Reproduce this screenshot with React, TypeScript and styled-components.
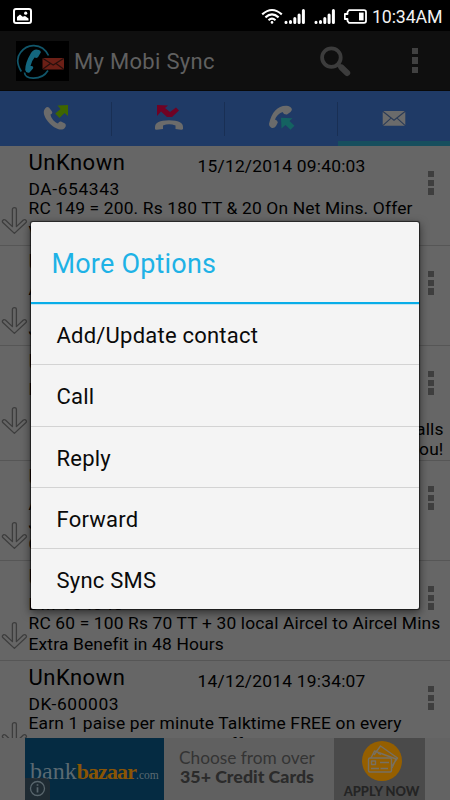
import React from 'react';
import styled, { createGlobalStyle } from 'styled-components';

const GlobalStyle = createGlobalStyle`
  * { box-sizing: border-box; }
  body { margin: 0; background: #666; font-family: Roboto, sans-serif; overflow: hidden; }
  svg { display: block; }
`;

const Screen = styled.div`
  position: relative;
  display: flex;
  flex-direction: column;
  width: 450px;
  height: 800px;
  overflow: hidden;
  background: #666;
  color: #000;
`;

const StatusBar = styled.div`
  flex: none;
  display: flex;
  align-items: center;
  justify-content: space-between;
  height: 31px;
  padding: 1px 7px 0 13px;
  background: #000;
  color: #fff;
`;

const StatusIcons = styled.div`
  display: flex;
  align-items: center;
`;

const Clock = styled.span`
  margin-left: 5px;
  padding-top: 2px;
  width: 71px;
  font-size: 17.8px;
  line-height: 24px;
  letter-spacing: -0.15px;
  color: #f2f2f2;
`;

const AppBar = styled.div`
  flex: none;
  display: flex;
  align-items: center;
  height: 60px;
  padding: 0 32px 0 16px;
  background: #0f0f0f;
  border-bottom: 1px solid #080808;
`;

const AppTitle = styled.h1`
  flex: 1;
  margin: 2px 0 0 5px;
  font-size: 22px;
  font-weight: 400;
  line-height: 28px;
  letter-spacing: 0.3px;
  color: #606060;
`;

const SearchButton = styled.div`
  margin-right: 61px;
`;

const Dots = styled.div<{ $color: string; $gap: number }>`
  display: flex;
  flex-direction: column;
  gap: ${(p) => p.$gap}px;
  &::before, &::after { content: ''; }
  &::before, &::after, & > i {
    width: 6.4px;
    height: 6.4px;
    background: ${(p) => p.$color};
  }
`;

const Tabs = styled.div`
  flex: none;
  display: grid;
  grid-template-columns: 112px 113px 113px 112px;
  height: 55px;
  background: #1f3a66;
`;

const Tab = styled.div<{ $active?: boolean }>`
  display: flex;
  justify-content: center;
  padding-top: 10px;
  border-bottom: ${(p) => (p.$active ? '5px solid #174f5e' : '0')};
  background: linear-gradient(#192f54, #192f54) right 11px / 1px 34px no-repeat;
  &:last-child { background: none; }
`;

const List = styled.div`
  flex: 1;
  overflow: hidden;
`;

const Row = styled.div<{ $height: number }>`
  display: flex;
  height: ${(p) => p.$height}px;
  border-bottom: 1px solid #565656;
`;

const ArrowCell = styled.div`
  flex: none;
  width: 28.5px;
  padding: 60px 0 0 1px;
`;

const RowBody = styled.div`
  flex: none;
  width: 399.5px;
`;

const RowHead = styled.div`
  display: flex;
  height: 30px;
  padding-top: 3px;
`;

const Sender = styled.div`
  width: 169px;
  font-size: 22px;
  line-height: 28px;
  letter-spacing: 0.5px;
`;

const Stamp = styled.div`
  padding-top: 4px;
  font-size: 17.4px;
  line-height: 26px;
  letter-spacing: 0.22px;
`;

const Address = styled.div`
  padding-top: 3px;
  height: 22px;
  font-size: 17.4px;
  line-height: 21px;
  letter-spacing: 0.6px;
`;

const Message = styled.div`
  width: 421px;
  white-space: pre;
  font-size: 17.4px;
  line-height: 20.5px;
  letter-spacing: 0.16px;
`;

const MessageTail = styled.div`
  width: 415px;
  text-align: right;
  font-size: 17.4px;
  line-height: 20.5px;
  letter-spacing: 0.14px;
  white-space: pre;
`;

const RowMenu = styled.div`
  padding-top: 25px;
`;

const AdBanner = styled.div`
  flex: none;
  display: flex;
  height: 62px;
  padding-left: 25px;
  background: #636363;
`;

const BrandPanel = styled.div`
  position: relative;
  width: 139px;
  padding: 17px 0 0 5px;
  background: #052b42;
  font-family: "Liberation Serif", serif;
  font-size: 24px;
  line-height: 32px;
  color: #5b6a72;
  white-space: nowrap;
`;

const BrandAccent = styled.span`
  font-size: 22px;
  font-weight: 700;
  letter-spacing: -0.9px;
  color: #8a5505;
`;

const BrandSuffix = styled.span`
  font-size: 11.5px;
`;

const InfoBadge = styled.div`
  position: absolute;
  left: 0;
  bottom: 0;
  width: 25px;
  height: 22px;
  padding: 2px 0 0 4px;
  background: rgba(37, 44, 48, 0.85);
  border-top-right-radius: 5px;
`;

const AdCopy = styled.div`
  width: 170px;
  padding: 10px 0 0 15px;
  background: #606060;
  font-family: Lato, sans-serif;
  font-size: 17.3px;
  line-height: 19px;
  color: #343434;
  white-space: nowrap;
`;

const AdStrong = styled.div`
  padding-left: 1px;
  line-height: 18px;
  font-size: 17.8px;
  font-weight: 900;
  color: #2b2b2b;
`;

const ApplyPanel = styled.div`
  display: flex;
  flex-direction: column;
  align-items: center;
  width: 91px;
  padding: 3px 0 0 4px;
  background: #4a4a4a;
`;

const ApplyLabel = styled.span`
  padding-top: 2px;
  font-family: Lato, sans-serif;
  font-size: 12.9px;
  font-weight: 900;
  line-height: 17px;
  color: #242424;
  white-space: nowrap;
`;

const Dialog = styled.div`
  position: absolute;
  left: 31px;
  top: 222px;
  width: 388px;
  height: 387px;
  border-radius: 2px;
  background: #f4f4f4;
  box-shadow: 0 0 1px 0.5px rgba(0, 0, 0, 0.6), 0 3px 9px 1px rgba(0, 0, 0, 0.5);
`;

const DialogTitle = styled.div`
  height: 82px;
  padding: 24px 0 0 20.5px;
  border-bottom: 2px solid #08ade8;
  box-shadow: 0 1px 0 #c4e5f1;
  font-size: 27px;
  line-height: 36px;
  letter-spacing: 0.2px;
  color: #1eb2e6;
`;

const Option = styled.div`
  height: 61.25px;
  padding-left: 25.5px;
  border-bottom: 1px solid #d3d3d3;
  font-size: 22px;
  line-height: 63.5px;
  letter-spacing: 0.22px;
  color: #0a0a0a;
  &:last-child { border-bottom: 0; }
`;

const OverflowDots = ({ color, gap }: { color: string; gap: number }) => (
  <Dots $color={color} $gap={gap}><i /></Dots>
);

const DownArrow = () => (
  <svg width="27" height="29" viewBox="0 0 27 29" fill="none" stroke="#3d3d3d" strokeWidth="1.3" strokeLinejoin="round">
    <path d="M11.4 3.5Q11.4 1.7 13.4 1.7Q15.4 1.7 15.4 3.5V20.6L22.4 14Q24 13 25 14.3Q26 15.6 24.7 16.8L13.4 27.4L2.1 16.8Q.8 15.6 1.8 14.3Q2.8 13 4.4 14L11.4 20.6Z" />
  </svg>
);

const SignalIcon = () => (
  <svg width="30" height="17" viewBox="0 0 30 17" stroke="#fff" strokeWidth="3" strokeLinecap="round">
    <path d="M2 14.3v.2M6.5 13.4v1.1M10.8 10.5v4M15.1 7v7.5M19.4 2.5v12" />
  </svg>
);

const HANDSET = 'M1 5C-1 12 11 25 19 24C22 23.5 24 20 22 18L18 16Q16 15.5 15 18C12 17 8 13 7.5 9Q10 8 9 6L6 2Q3 0 1 5Z';

type RowData = { height: number; from: string; date: string; address: string; lines: string[]; tail?: string[] };

const rows: RowData[] = [
  { height: 100, from: 'UnKnown', date: '15/12/2014 09:40:03', address: 'DA-654343', lines: ['RC 149 = 200. Rs 180 TT & 20 On Net Mins. Offer', 'valid for today only at select Outlets'] },
  { height: 100, from: 'UnKnown', date: '', address: 'AD-654343', lines: ['', 'J'] },
  { height: 115, from: 'UnKnown', date: '', address: 'DZ-600003', lines: ['', ''], tail: ['calls', 'you!'] },
  { height: 100, from: 'UnKnown', date: '', address: 'AZ-654343', lines: ['J', 'G'] },
  { height: 100, from: 'UnKnown', date: '', address: 'DM-654343', lines: ['RC 60 = 100 Rs 70 TT + 30 local Aircel to Aircel Mins', 'Extra Benefit in 48 Hours'] },
  { height: 100, from: 'UnKnown', date: '14/12/2014 19:34:07', address: 'DK-600003', lines: ['Earn 1 paise per minute Talktime FREE on every', 'Incoming call!!Want 2 sin ffer! Yes, dial and enjoy all'] },
];

const SmsRow = ({ row }: { row: RowData }) => (
  <Row $height={row.height}>
    <ArrowCell><DownArrow /></ArrowCell>
    <RowBody>
      <RowHead>
        <Sender>{row.from}</Sender>
        <Stamp>{row.date}</Stamp>
      </RowHead>
      <Address>{row.address}</Address>
      {row.tail
        ? <MessageTail>{['', ...row.tail].join('\n')}</MessageTail>
        : <Message>{row.lines.join('\n')}</Message>}
    </RowBody>
    <RowMenu><OverflowDots color="#3e3e3e" gap={2.3} /></RowMenu>
  </Row>
);

export default function App() {
  return (
    <Screen>
      <GlobalStyle />
      <StatusBar>
        <svg width="19" height="16" viewBox="0 0 19 16">
          <rect x="1" y="1" width="17" height="14" rx="2" fill="none" stroke="#fff" strokeWidth="2" />
          <path d="M4 12.5V9l3-2.5 2.7 2.2L12 8l3.5 2.5v2Z" fill="#fff" />
          <circle cx="12.7" cy="5.2" r="1.6" fill="#fff" />
        </svg>
        <StatusIcons>
          <svg width="23" height="17" viewBox="0 0 23 17" fill="none" stroke="#fff" strokeWidth="2.1">
            <path d="M1.2 6.4Q11 -2.4 20.8 6.4M4.4 9.4Q11 3.4 17.6 9.4M7.5 12.2Q11 9 14.5 12.2" />
            <circle cx="11" cy="14.4" r="1.3" fill="#fff" stroke="none" />
          </svg>
          <SignalIcon />
          <SignalIcon />
          <svg width="23" height="15" viewBox="0 0 23 15">
            <path d="M3.5 3L5 1.2H20Q22 1.2 22 3V12Q22 13.8 20 13.8H5L3.5 12V10H.8V5H3.5Z" fill="none" stroke="#fff" strokeWidth="1.8" strokeLinejoin="round" />
            <rect x="15" y="3.6" width="4.6" height="7.8" fill="#fff" />
          </svg>
          <Clock>10:34AM</Clock>
        </StatusIcons>
      </StatusBar>

      <AppBar>
        <svg width="53" height="40" viewBox="0 0 53 40">
          <rect width="53" height="40" fill="#000" />
          <g fill="none" stroke="#11566a" strokeWidth="1.7">
            <path d="M5.3 30.5Q-1.5 19 4.5 11.5Q10 4.2 18 4.6Q28 5 32.5 14.5" />
            <path d="M8.5 31.5Q9 37 17 37.2Q27 37.5 32 29.5" />
          </g>
          <path d="M23 9Q18 7 15 12Q9 22 9.2 29Q10 32.5 13.5 31.5L17 27.5Q18 24.5 14.5 25Q15.5 20 18.5 16.5Q22 18 23 14.5L24.8 11.5Q25 9.7 23 9Z" fill="#13677f" />
          <rect x="26.5" y="17" width="21.5" height="11.6" rx="1" fill="#6b1f16" />
          <path d="M27 17.6L37.2 24L47.5 17.6M27 28L34.5 22.4M47.5 28L40 22.4" fill="none" stroke="#27100d" strokeWidth="1.2" />
        </svg>
        <AppTitle>My Mobi Sync</AppTitle>
        <SearchButton>
          <svg width="32" height="32" viewBox="0 0 32 32" fill="none" stroke="#3c3c3c">
            <circle cx="12.4" cy="12.6" r="9.3" strokeWidth="3.8" />
            <path d="M19.5 20L22 22.5" strokeWidth="4" />
            <path d="M22.5 22.5L28.2 28" strokeWidth="6" strokeLinecap="round" />
          </svg>
        </SearchButton>
        <OverflowDots color="#414141" gap={3.1} />
      </AppBar>

      <Tabs>
        <Tab>
          <svg width="28" height="32" viewBox="0 0 28 32">
            <g transform="translate(1 4.5)"><path d={HANDSET} fill="#6b6b6b" /></g>
            <path d="M15.5 4.6L26 4V15L22.6 12L17.5 17L13.2 12.5L18.5 8Z" fill="#3f6600" />
          </svg>
        </Tab>
        <Tab>
          <svg width="28" height="32" viewBox="0 0 28 32">
            <path d="M2 4L13 4.5L10 7L15 11L21 6.5L24 9.5L17 16H12L6 10.5L2 15Z" fill="#700224" />
            <path d="M0 26Q0 19.2 14 19.2Q28 19.2 28 26V28Q27.5 29 26 28.7L20.5 28V24.5Q14 22 8 24.5V28L2 28.7Q0 29 0 28Z" fill="#6b6b6b" />
          </svg>
        </Tab>
        <Tab>
          <svg width="28" height="32" viewBox="0 0 28 32">
            <path d="M18 4.8Q5 5 1 23Q1 25.5 3 26.5Q6 28 8 25L9.8 21.5Q9.8 19.5 7 18.5Q9 13 14.5 11Q16 14 19 13.5L22.5 11Q25.5 8 22 5.8Q20 4.6 18 4.8Z" fill="#6b6b6b" />
            <path d="M13 16.8L24.5 17.2L21.5 20L26.5 24.8L22.5 28.7L17.5 24L13.5 27.5Z" fill="#146261" />
          </svg>
        </Tab>
        <Tab $active>
          <svg width="24" height="32" viewBox="0 0 24 32">
            <rect x=".7" y="10" width="22.6" height="14.8" rx="1.5" fill="#6b6b6b" />
            <path d="M1 10.5L12 19.3L23 10.5M1 24.4L9 17.2M23 24.4L15 17.2" fill="none" stroke="#293a57" strokeWidth="1.1" />
          </svg>
        </Tab>
      </Tabs>

      <List>{rows.map((row, i) => <SmsRow key={i} row={row} />)}</List>

      <AdBanner>
        <BrandPanel>
          bank<BrandAccent>bazaar</BrandAccent><BrandSuffix>.com</BrandSuffix>
          <InfoBadge>
            <svg width="17" height="17" viewBox="0 0 17 17" fill="none" stroke="#59666d" strokeWidth="1.3">
              <circle cx="8.5" cy="8.5" r="7" />
              <path d="M8.5 7.2V12.5M8.5 4.2V5.8" strokeWidth="1.7" />
            </svg>
          </InfoBadge>
        </BrandPanel>
        <AdCopy>
          Choose from over
          <AdStrong>35+ Credit Cards</AdStrong>
        </AdCopy>
        <ApplyPanel>
          <svg width="40" height="40" viewBox="0 0 40 40" fill="none" stroke="#777062" strokeWidth="1.4" strokeLinejoin="round">
            <circle cx="20" cy="20" r="20" fill="#955f00" stroke="none" />
            <path d="M12 14L18.5 5L35.5 17L30 25M9 17L12.5 10L34 18L30 27" fill="#955f00" />
            <rect x="6.5" y="17" width="23" height="14" rx="1.5" fill="#955f00" />
            <rect x="9.5" y="20" width="4" height="3.5" />
            <path d="M9 27.5H17M18.5 27.5H26M18 21.5H27M16 12L19 13.5" />
          </svg>
          <ApplyLabel>APPLY NOW</ApplyLabel>
        </ApplyPanel>
      </AdBanner>

      <Dialog>
        <DialogTitle>More Options</DialogTitle>
        {['Add/Update contact', 'Call', 'Reply', 'Forward', 'Sync SMS'].map((label) => (
          <Option key={label}>{label}</Option>
        ))}
      </Dialog>
    </Screen>
  );
}
